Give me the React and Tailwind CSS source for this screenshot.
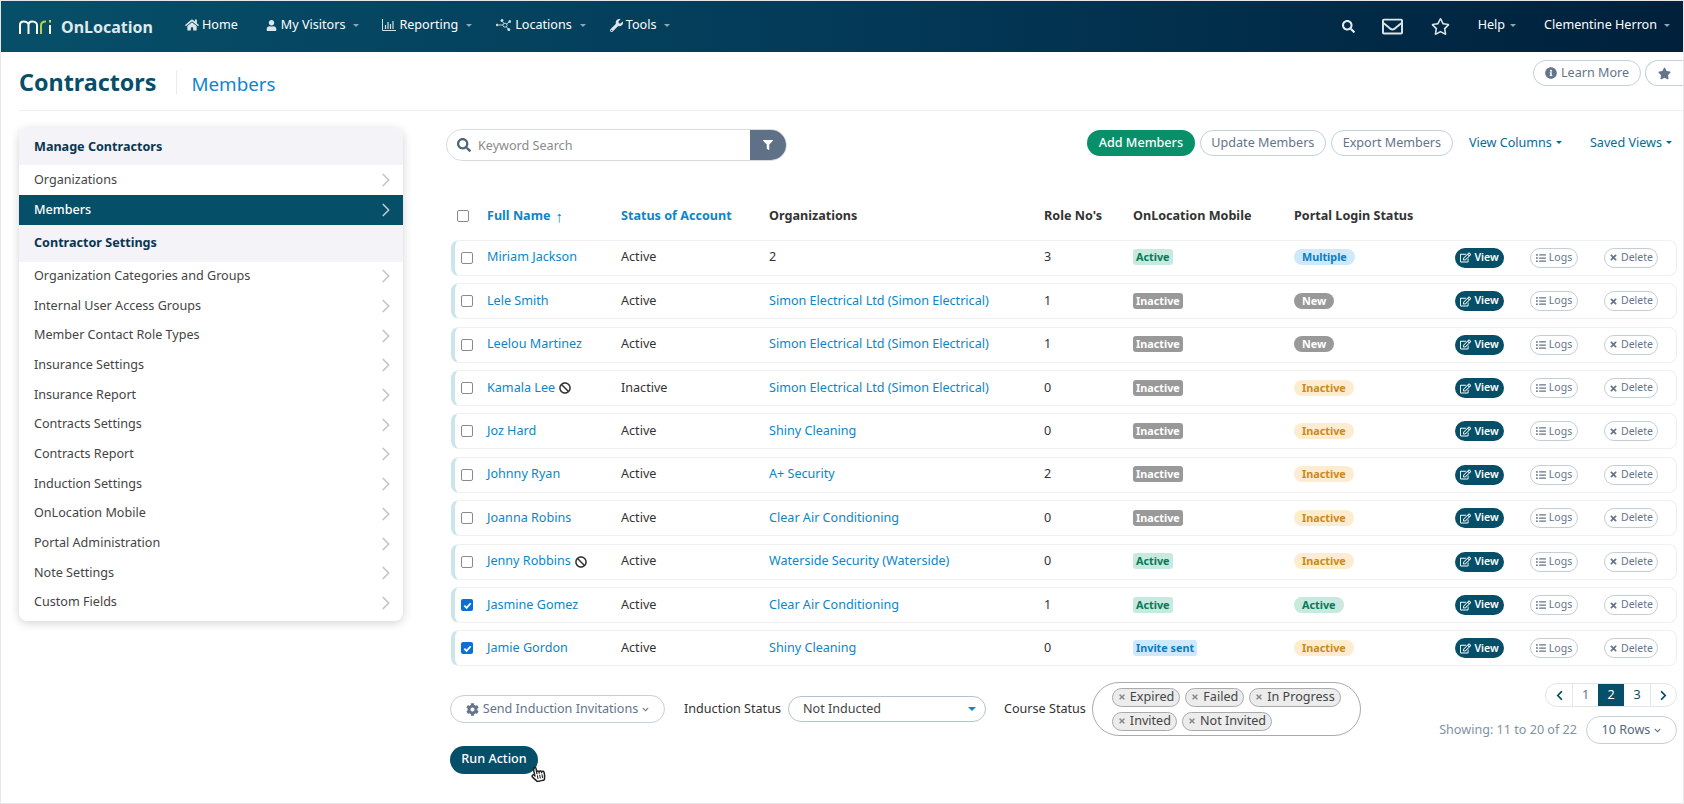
import { ChevronRight } from "lucide-react";
import {
  FaHome, FaUser, FaWrench, FaSearch, FaRegEnvelope, FaRegStar, FaStar, FaInfoCircle, FaFilter,
  FaRegEdit, FaListUl, FaTimes, FaBan, FaCog, FaChevronDown, FaChevronLeft, FaChevronRight,
  FaRegHandPointer,
} from "react-icons/fa";

const font = { fontFamily: "'Noto Sans', sans-serif" };

const settings = [
  "Organization Categories and Groups", "Internal User Access Groups", "Member Contact Role Types",
  "Insurance Settings", "Insurance Report", "Contracts Settings", "Contracts Report",
  "Induction Settings", "OnLocation Mobile", "Portal Administration", "Note Settings", "Custom Fields",
];

const rows = [
  { name: "Miriam Jackson", status: "Active", org: "2", plain: true, role: 3, mobile: "Active", portal: "Multiple" },
  { name: "Lele Smith", status: "Active", org: "Simon Electrical Ltd (Simon Electrical)", role: 1, mobile: "Inactive", portal: "New" },
  { name: "Leelou Martinez", status: "Active", org: "Simon Electrical Ltd (Simon Electrical)", role: 1, mobile: "Inactive", portal: "New" },
  { name: "Kamala Lee", ban: true, status: "Inactive", org: "Simon Electrical Ltd (Simon Electrical)", role: 0, mobile: "Inactive", portal: "Inactive" },
  { name: "Joz Hard", status: "Active", org: "Shiny Cleaning", role: 0, mobile: "Inactive", portal: "Inactive" },
  { name: "Johnny Ryan", status: "Active", org: "A+ Security", role: 2, mobile: "Inactive", portal: "Inactive" },
  { name: "Joanna Robins", status: "Active", org: "Clear Air Conditioning", role: 0, mobile: "Inactive", portal: "Inactive" },
  { name: "Jenny Robbins", ban: true, status: "Active", org: "Waterside Security (Waterside)", role: 0, mobile: "Active", portal: "Inactive" },
  { name: "Jasmine Gomez", checked: true, status: "Active", org: "Clear Air Conditioning", role: 1, mobile: "Active", portal: "Active" },
  { name: "Jamie Gordon", checked: true, status: "Active", org: "Shiny Cleaning", role: 0, mobile: "Invite sent", portal: "Inactive" },
];

const mobileStyles = {
  Active: "bg-[#c8e9dd] text-[#067a5a]",
  Inactive: "bg-[#999999] text-white",
  "Invite sent": "bg-[#cde9fb] text-[#0a7dbf]",
};
const portalStyles = {
  Multiple: "bg-[#cde9fb] text-[#0a7dbf]",
  New: "bg-[#999999] text-white",
  Inactive: "bg-[#fdeccf] text-[#c98a1c]",
  Active: "bg-[#c8e9dd] text-[#067a5a]",
};

function Caret({ className = "border-t-[#9fb3c0]" }) {
  return <span className={`inline-block w-0 h-0 border-x-[3px] border-x-transparent border-t-[3px] ${className}`} />;
}

function Logo() {
  return (
    <svg width="33" height="14" viewBox="0 0 33 14" fill="none" stroke="#fff" strokeWidth="2">
      <path d="M1 14V5C1 2.500 2.600 1.500 4.600 1.500S9.500 2.500 9.500 5V14M9.500 5C9.500 2.500 11.200 1.500 13.200 1.500S18 2.500 18 5V14" />
      <path d="M22 14V5.500C22 2.800 24 1.500 27 1.500" stroke="#b5cf4a" />
      <path d="M31 5V14" />
      <path d="M31 0V2.600" stroke="#c5d84a" />
    </svg>
  );
}

function NetworkIcon() {
  return (
    <svg width="15" height="12" viewBox="0 0 15 12" fill="#cfe0e6" stroke="#cfe0e6" strokeWidth="0.9">
      <circle cx="1" cy="6" r="0.9" />
      <circle cx="6" cy="1.500" r="1.100" />
      <circle cx="9" cy="6.200" r="2" fill="none" />
      <circle cx="13.800" cy="2.500" r="1" />
      <circle cx="12.800" cy="10.700" r="1.100" />
      <path d="M2 6H7M6.400 2.500 8 4.500M10.500 5 13 3.200M10.400 7.800 12.200 10" />
    </svg>
  );
}

function BarsIcon() {
  return (
    <svg width="14" height="12" viewBox="0 0 14 12" fill="none" stroke="#cfe0e6">
      <path d="M.5 0v11.500H14" />
      <path d="M3.500 10V6M6 10V3M8.500 10V5M11 10V2" strokeWidth="1.200" />
    </svg>
  );
}

function NavItem({ icon, label, caret, className, caretClass = "ml-[8px]" }) {
  return (
    <a className={`flex items-center pb-[2px] text-[12.6px] text-white ${className}`}>
      {icon}
      <span>{label}</span>
      {caret && <Caret className={`${caretClass} border-t-[#8fa6b4]`} />}
    </a>
  );
}

function Checkbox({ checked, className = "" }) {
  if (checked) {
    return (
      <span className={`flex h-[12px] w-[12px] items-center justify-center rounded-[2px] bg-[#0a6fd6] ${className}`}>
        <svg width="9" height="9" viewBox="0 0 10 10" fill="none" stroke="#fff" strokeWidth="2"><path d="M1.500 5.200 4 7.700 8.500 2.500" /></svg>
      </span>
    );
  }
  return <span className={`block h-[12px] w-[12px] rounded-[2px] border border-[#8a8a8a] bg-white ${className}`} />;
}

function Row({ row }) {
  return (
    <div className="grid h-[36px] grid-cols-[32px_134px_148px_275px_89px_161px_161px_75px_74px_72px] items-center rounded-[8px] border border-[#eef0f2] border-l-[4px] border-l-[#cbe6ea] text-[12.6px] text-[#333]">
      <Checkbox checked={row.checked} className="ml-[6px]" />
      <div className="flex items-center gap-[4px] text-[#0b86c9]">
        <span>{row.name}</span>
        {row.ban && <FaBan className="text-[12px] text-[#333]" />}
      </div>
      <div>{row.status}</div>
      <div className={row.plain ? "" : "text-[#0b86c9]"}>{row.org}</div>
      <div>{row.role}</div>
      <div>
        <span className={`inline-block h-[16px] rounded-[3px] px-[3px] text-[10.8px] leading-[16px] font-bold ${mobileStyles[row.mobile]}`}>{row.mobile}</span>
      </div>
      <div>
        <span className={`inline-block h-[16px] rounded-full px-[8px] text-[10.8px] leading-[16px] font-bold ${portalStyles[row.portal]}`}>{row.portal}</span>
      </div>
      <div>
        <button className="flex h-[20px] w-[49px] items-center justify-center gap-[3px] rounded-full bg-[#064f68] text-[10.500px] font-semibold text-white">
          <FaRegEdit className="text-[11px]" /> View
        </button>
      </div>
      <div>
        <button className="flex h-[20px] w-[48px] items-center justify-center gap-[3px] rounded-full border border-[#c3ced6] text-[10.500px] text-[#64748b]">
          <FaListUl className="text-[10px]" /> Logs
        </button>
      </div>
      <div>
        <button className="flex h-[20px] w-[54px] items-center justify-center gap-[3px] rounded-full border border-[#c3ced6] text-[10.500px] text-[#64748b]">
          <FaTimes className="text-[9px]" /> Delete
        </button>
      </div>
    </div>
  );
}

function Chip({ label }) {
  return (
    <span className="flex h-[19px] items-center gap-[4px] rounded-full border border-[#aaaaaa] bg-[#ececec] px-[5px] text-[12.6px] text-[#444]">
      <FaTimes className="text-[8px] text-[#888]" />
      {label}
    </span>
  );
}

function PageCell({ children, active, className = "" }) {
  return (
    <span className={`flex h-full items-center justify-center text-[12.6px] ${active ? "bg-[#064f68] text-white" : "text-[#064f68]"} ${className}`}>
      {children}
    </span>
  );
}

export default function App() {
  return (
    <div style={font} className="flex h-[804px] w-[1684px] flex-col overflow-hidden border border-[#e5e7eb] bg-white">
      <header className="flex h-[51px] shrink-0 items-center bg-gradient-to-r from-[#074f68] via-[#033a58] to-[#00203b] pr-[13px]">
        <span className="ml-[18px]"><Logo /></span>
        <span className="ml-[9px] text-[16px] font-bold text-[#dfe9ec]">OnLocation</span>
        <NavItem className="ml-[32px]" icon={<FaHome className="mr-[3px] text-[14px] text-[#dce6ea]" />} label="Home" />
        <NavItem className="ml-[28px]" icon={<FaUser className="mr-[4px] text-[11px] text-[#dce6ea]" />} label="My Visitors" caret />
        <NavItem className="ml-[23px]" icon={<span className="mr-[3px]"><BarsIcon /></span>} label="Reporting" caret />
        <NavItem className="ml-[24px]" icon={<span className="mr-[4px]"><NetworkIcon /></span>} label="Locations" caret />
        <NavItem className="ml-[24px]" icon={<FaWrench className="mr-[3px] text-[13px] text-[#dce6ea]" />} label="Tools" caret />
        <div className="ml-auto flex items-center">
          <FaSearch className="text-[13px] text-[#e4ecef]" />
          <FaRegEnvelope className="ml-[27px] text-[21px] text-[#dbe4e8]" />
          <FaRegStar className="ml-[28px] text-[19px] text-[#dbe4e8]" />
          <NavItem className="ml-[28px]" label="Help" caret caretClass="ml-[5px]" />
          <NavItem className="ml-[28px]" label="Clementine Herron" caret caretClass="ml-[7px]" />
        </div>
      </header>

      <div className="ml-[18px] flex h-[59px] shrink-0 items-center border-b border-[#eceef0]">
        <h1 className="mt-[4px] text-[23.300px] leading-none font-bold text-[#064f68]">Contractors</h1>
        <span className="mt-[2px] ml-[20px] h-[24px] w-px bg-[#e8eaec]" />
        <span className="mt-[7px] ml-[14px] text-[18.800px] text-[#0b86d0]">Members</span>
        <div className="mt-[-16px] ml-auto flex items-center gap-[4px] text-[12.6px] text-[#64748b]">
          <button className="flex h-[26px] w-[108px] items-center justify-center gap-[4px] rounded-full border border-[#c5d0d8]">
            <FaInfoCircle className="text-[12px]" /> Learn More
          </button>
          <button className="flex h-[26px] w-[38px] items-center justify-center rounded-l-full border border-r-0 border-[#c5d0d8]">
            <FaStar className="text-[13px]" />
          </button>
        </div>
      </div>

      <div className="flex min-h-0 flex-1">
        <aside className="mt-[17px] ml-[18px] w-[384px] shrink-0 self-start overflow-hidden rounded-[8px] text-[12.6px] text-[#444] shadow-[0_2px_10px_rgba(0,0,0,0.18)]">
          <div className="flex h-[37px] items-center bg-[#f3f3f8] px-[15px] pt-px font-bold text-[#0b3650]">Manage Contractors</div>
          <div className="flex h-[30px] items-center justify-between pr-[6px] pl-[15px]">
            Organizations <ChevronRight size={22} strokeWidth={1.8} className="text-[#c4c4c4]" />
          </div>
          <div className="flex h-[30px] items-center justify-between bg-[#064f68] pr-[6px] pl-[15px] font-medium text-white">
            Members <ChevronRight size={22} strokeWidth={1.8} className="text-[#b9c9d0]" />
          </div>
          <div className="flex h-[36.5px] items-center bg-[#f3f3f8] px-[15px] font-bold text-[#0b3650]">Contractor Settings</div>
          <div className="pb-[3.5px]">
            {settings.map((s) => (
              <div key={s} className="flex h-[29.7px] items-center justify-between pr-[6px] pl-[15px]">
                {s} <ChevronRight size={22} strokeWidth={1.8} className="text-[#c4c4c4]" />
              </div>
            ))}
          </div>
        </aside>

        <main className="mr-[6px] ml-[43px] min-w-0 flex-1 pt-[18px]">
          <div className="flex h-[32px] items-start justify-between">
            <div className="flex h-[32px] w-[341px] items-center overflow-hidden rounded-full border border-[#d5dde2]">
              <FaSearch className="ml-[10px] text-[14px] text-[#4d6478]" />
              <span className="mt-[2px] ml-[7px] flex-1 text-[12.6px] text-[#8a8a8a]">Keyword Search</span>
              <span className="flex h-full w-[36px] items-center justify-center bg-[#5f7186] text-white">
                <FaFilter className="text-[10px]" />
              </span>
            </div>
            <div className="mt-px flex items-center text-[12.6px]">
              <button className="flex h-[26px] w-[108px] items-center justify-center rounded-full bg-[#07906a] font-medium text-white">Add Members</button>
              <button className="ml-[5px] flex h-[26px] w-[126px] items-center justify-center rounded-full border border-[#c5d0d8] text-[#64748b]">Update Members</button>
              <button className="ml-[5px] flex h-[26px] w-[122px] items-center justify-center rounded-full border border-[#c5d0d8] text-[#64748b]">Export Members</button>
              <span className="ml-[16px] flex items-center gap-[4px] text-[#0b6a94]">View Columns <Caret className="border-t-[#0b6a94]" /></span>
              <span className="mr-[5px] ml-[28px] flex items-center gap-[4px] text-[#0b6a94]">Saved Views <Caret className="border-t-[#0b6a94]" /></span>
            </div>
          </div>

          <div className="mt-[36px] ml-[5px]">
            <div className="grid h-[42.9px] grid-cols-[36px_134px_148px_275px_89px_161px_161px_75px_74px_72px] items-center pb-[4px] text-[12.6px] font-bold text-[#333]">
              <Checkbox className="ml-[6px]" />
              <span className="flex items-center gap-[5px] text-[#0b86c9]">Full Name <span className="text-[15px] leading-none font-normal">↑</span></span>
              <span className="text-[#0b86c9]">Status of Account</span>
              <span>Organizations</span>
              <span>Role No's</span>
              <span>OnLocation Mobile</span>
              <span>Portal Login Status</span>
            </div>
            <div className="flex flex-col gap-[7.400px]">
              {rows.map((r) => <Row key={r.name} row={r} />)}
            </div>
          </div>

          <div className="mt-[16px] ml-[4px] flex items-start justify-between">
            <div>
              <div className="flex h-[54px] items-center text-[12.6px] text-[#333]">
                <button className="flex h-[28px] w-[215px] items-center justify-center gap-[4px] rounded-full border border-[#c5d0d8] text-[#64748b]">
                  <FaCog className="text-[13px]" /> Send Induction Invitations <FaChevronDown className="text-[7px]" />
                </button>
                <span className="ml-[19px]">Induction Status</span>
                <div className="ml-[7px] flex h-[26px] w-[198px] items-center justify-between rounded-full border border-[#b4c3d0] pr-[9px] pl-[14px] text-[#444]">
                  Not Inducted <span className="inline-block h-0 w-0 border-x-[4px] border-t-[4px] border-x-transparent border-t-[#0b86d0]" />
                </div>
                <span className="ml-[18px]">Course Status</span>
                <div className="ml-[6px] flex h-[54px] w-[269px] shrink-0 flex-wrap content-center gap-x-[5px] gap-y-[5px] rounded-[27px] border border-[#aaaaaa] pr-[10px] pl-[19px]">
                  {["Expired", "Failed", "In Progress", "Invited", "Not Invited"].map((c) => <Chip key={c} label={c} />)}
                </div>
              </div>
              <div className="relative mt-[9px] w-[88px]">
                <button className="h-[28px] w-[88px] rounded-full bg-[#064f68] text-[12.6px] font-medium text-white">Run Action</button>
                <FaRegHandPointer className="absolute top-[21px] left-[80px] -rotate-12 text-[16px] text-[#222]" />
              </div>
            </div>
            <div className="mt-px flex flex-col items-end">
              <div className="grid h-[24px] w-[132px] grid-cols-[27px_25px_26px_27px_25px] overflow-hidden rounded-full border border-[#e1e6ea]">
                <PageCell className="border-r border-[#e1e6ea]"><FaChevronLeft className="text-[11px]" /></PageCell>
                <PageCell className="text-[#64748b]">1</PageCell>
                <PageCell active>2</PageCell>
                <PageCell className="border-r border-[#e1e6ea]">3</PageCell>
                <PageCell><FaChevronRight className="text-[11px]" /></PageCell>
              </div>
              <div className="mt-[9px] flex items-center text-[12.6px] text-[#7f93a3]">
                Showing: 11 to 20 of 22
                <button className="ml-[9px] flex h-[28px] w-[91px] items-center justify-center gap-[4px] rounded-full border border-[#c5d0d8] text-[#55697a]">
                  10 Rows <FaChevronDown className="text-[7px]" />
                </button>
              </div>
            </div>
          </div>
        </main>
      </div>
    </div>
  );
}
